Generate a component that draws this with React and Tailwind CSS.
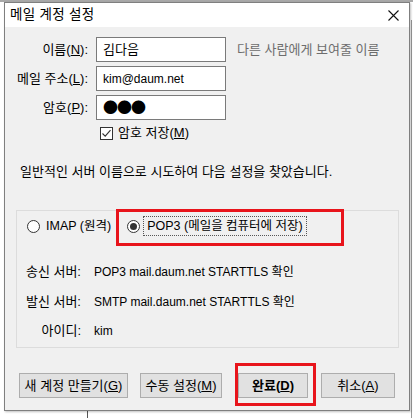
import React from "react";

const Radio = ({ checked }) => (
  <span className="w-[13px] h-[13px] rounded-full border border-[#333] bg-white flex items-center justify-center shrink-0">
    {checked && <span className="w-[7px] h-[7px] rounded-full bg-[#333]" />}
  </span>
);

const Button = ({ children, className = "" }) => (
  <button
    type="button"
    className={`h-[25px] bg-[#e1e1e1] border border-[#adadad] text-[13px] text-black flex items-center justify-center ${className}`}
  >
    {children}
  </button>
);

const FieldRow = ({ label, keyChar, value, hint, valueClass }) => (
  <div className="flex items-center h-[25px]">
    <div className="w-[83px] text-right text-[13px] text-black whitespace-nowrap">
      {label}(<u>{keyChar}</u>):
    </div>
    <div
      className={`ml-[8px] w-[130px] h-[25px] bg-white border border-[#7a7a7a] flex items-center pl-[6px] text-black ${valueClass}`}
    >
      {value}
    </div>
    {hint && <div className="ml-[11px] text-[13px] text-[#6d6d6d] whitespace-nowrap">{hint}</div>}
  </div>
);

const ServerRow = ({ label, value, className = "" }) => (
  <div className={`flex items-center h-[16px] text-black whitespace-nowrap ${className}`}>
    <div className="w-[64px] text-right text-[13px]">{label}</div>
    <div className="ml-[13px] text-[12px]">{value}</div>
  </div>
);

export default function App() {
  return (
    <div
      className="relative w-[413px] h-[418px] bg-white overflow-hidden"
      style={{ fontFamily: '"Liberation Sans", "Noto Sans CJK KR", sans-serif' }}
    >
      {/* desktop behind the dialog */}
      <div className="h-[2px] bg-[#a8a8a8]" />
      <div className="absolute left-[87px] top-[405px] w-[1px] h-[13px] bg-[#555]" />
      <div className="absolute left-[411px] top-[20px] w-[1px] h-[398px] bg-[#9a9a9a]" />

      {/* dialog window */}
      <div className="absolute left-[4px] top-[2px] w-[406px] h-[409px] border border-[#7f7f7f] bg-[#f0f0f0] shadow-[1px_1px_2px_rgba(0,0,0,0.25)] flex flex-col">
        <div className="h-[24px] bg-white flex items-center justify-between pl-[5px] pr-[10px]">
          <span className="text-[13.5px] text-black tracking-[0.3px]">메일 계정 설정</span>
          <svg width="11" height="11" viewBox="0 0 11 11" fill="none" stroke="#111" strokeWidth="1.1">
            <path d="M0.5 0.5 L10.5 10.5 M10.5 0.5 L0.5 10.5" />
          </svg>
        </div>

        <div className="flex flex-col gap-[4px] mt-[10px]">
          <FieldRow label="이름" keyChar="N" value="김다음" valueClass="text-[13px]" hint="다른 사람에게 보여줄 이름" />
          <FieldRow label="메일 주소" keyChar="L" value="kim@daum.net" valueClass="text-[12px]" />
          <FieldRow
            label="암호"
            keyChar="P"
            value="●●●"
            valueClass="font-['Noto_Sans_CJK_KR',sans-serif] text-[15px] tracking-[-1px]"
          />
        </div>

        <div className="flex items-center h-[16px] mt-[5px] ml-[95px]">
          <span className="w-[13px] h-[13px] border border-[#333] bg-white flex items-center justify-center">
            <svg width="11" height="11" viewBox="0 0 11 11" fill="none" stroke="#333" strokeWidth="1.1">
              <path d="M1.5 5.5 L4.2 8.2 L9.5 2.2" />
            </svg>
          </span>
          <span className="ml-[5px] text-[13px] text-black">
            암호 저장(<u>M</u>)
          </span>
        </div>

        <div className="mt-[23px] ml-[15px] h-[16px] flex items-center text-[13px] text-black whitespace-nowrap">
          일반적인 서버 이름으로 시도하여 다음 설정을 찾았습니다.
        </div>

        <div className="relative mt-[30px] ml-[11px] w-[383px] h-[138px] border border-[#dcdcdc] flex flex-col">
          <div className="flex items-center h-[20px] mt-[5px] text-[12.5px] text-black whitespace-nowrap">
            <div className="ml-[10px] flex items-center">
              <Radio />
              <span className="ml-[6px]">IMAP (원격)</span>
            </div>
            <div className="ml-[16px] flex items-center">
              <Radio checked />
              <span className="ml-[3px] h-[20px] px-[3px] border border-dotted border-[#555] flex items-center">
                POP3 (메일을 컴퓨터에 저장)
              </span>
            </div>
          </div>
          <ServerRow className="mt-[28px]" label="송신 서버:" value="POP3 mail.daum.net STARTTLS 확인" />
          <ServerRow className="mt-[14px]" label="발신 서버:" value="SMTP mail.daum.net STARTTLS 확인" />
          <ServerRow className="mt-[13px]" label="아이디:" value="kim" />

          {/* annotation */}
          <div className="absolute left-[99px] top-[-2px] w-[228px] h-[37px] border-[3px] border-[#e8141b]" />
        </div>

        <div className="flex items-center mt-[25px] ml-[14px] whitespace-nowrap">
          <Button className="w-[109px]">
            새 계정 만들기(<u>G</u>)
          </Button>
          <Button className="w-[82px] ml-[12px]">
            수동 설정(<u>M</u>)
          </Button>
          <div className="relative ml-[16px]">
            <Button className="w-[70px] font-bold">
              완료(<u>D</u>)
            </Button>
            <div className="absolute left-[-3px] top-[-10px] w-[81px] h-[43px] border-[3px] border-[#e8141b]" />
          </div>
          <Button className="w-[74px] ml-[13px]">
            취소(<u>A</u>)
          </Button>
        </div>
      </div>
    </div>
  );
}
